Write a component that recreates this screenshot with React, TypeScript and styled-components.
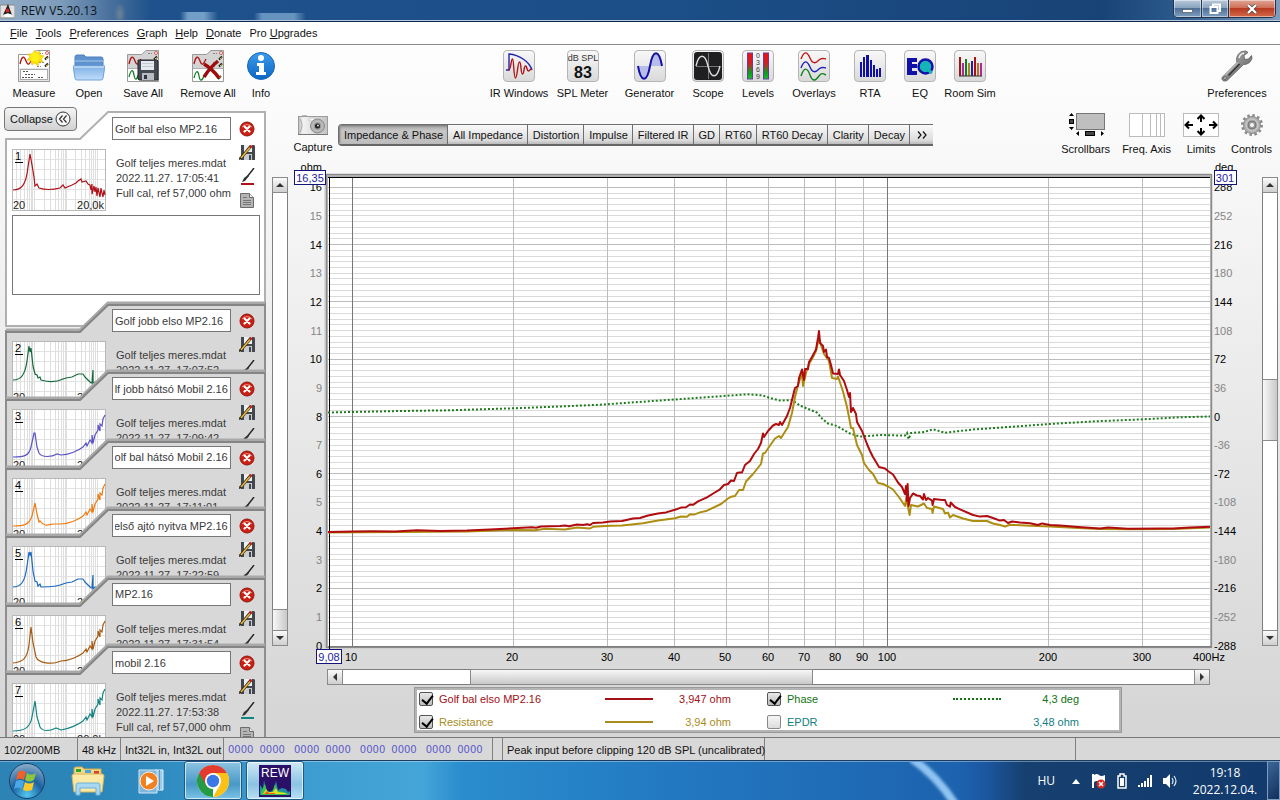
import React, { useEffect, useRef } from "react";
import styled, { createGlobalStyle } from "styled-components";

const Global = createGlobalStyle`
  * { box-sizing: border-box; }
  html, body { margin: 0; height: 100%; }
  body {
    font-family: "Liberation Sans", Arial, sans-serif;
    font-size: 11px;
    line-height: 14px;
    color: #111;
  }
  #root { height: 100%; }
  button, input, textarea { font: inherit; color: inherit; }
  button { border: 0; padding: 0; background: none; cursor: pointer; }
  svg { display: block; }
`;

const Desktop = styled.div`
  display: flex;
  flex-direction: column;
  height: 100vh;
  min-height: 600px;
  overflow: hidden;
`;

/* ---------- window title ---------- */

const TitleBar = styled.header`
  display: flex;
  align-items: center;
  justify-content: space-between;
  flex: none;
  height: 22px;
  border-bottom: 1px solid #10294f;
  box-shadow: inset 0 -1px #b4c8dc;
  background:
    radial-gradient(ellipse 6px 12px at 120px 14px, rgba(190, 180, 150, 0.35), transparent),
    linear-gradient(90deg, rgba(160, 195, 225, 0) 180px, rgba(150, 190, 225, 0.7) 188px, rgba(150, 190, 225, 0.7) 204px, rgba(160, 195, 225, 0) 218px) 0 12px no-repeat,
    linear-gradient(90deg, rgba(160, 195, 225, 0) 254px, rgba(150, 190, 225, 0.6) 262px, rgba(150, 190, 225, 0.6) 294px, rgba(160, 195, 225, 0) 306px) 0 13px no-repeat,
    linear-gradient(90deg, #93adc6 0, #7e9cbb 60px, #4a719d 110px, #1f528c 150px, #1c4f88 50%, #184377 86%, #2c5a8d 92%, #7f9cbb 100%);
`;

const AppName = styled.h1`
  display: flex;
  align-items: center;
  gap: 6px;
  margin: 0;
  font: 12px/18px "Open Sans", "Noto Sans", sans-serif;
  color: #0b1420;
`;

const WindowButtons = styled.div`
  display: flex;
  align-self: flex-start;
  margin-right: 4px;
  border: 1px solid #22354f;
  border-top: 0;
  border-radius: 0 0 5px 5px;
  overflow: hidden;
`;

const WindowButton = styled.button<{ $close?: boolean }>`
  display: grid;
  place-items: center;
  width: ${(p) => (p.$close ? 47 : 27)}px;
  height: 17px;
  box-shadow: inset 0 0 0 1px rgba(255, 255, 255, 0.45);
  background: ${(p) =>
    p.$close
      ? "linear-gradient(#e0a596 0, #cf6f58 45%, #b83a20 50%, #d4694a 100%)"
      : "linear-gradient(#b9cadb 0, #8ba4bf 45%, #4f7098 50%, #7f9fc0 100%)"};
  & + & { border-left: 1px solid #22354f; }
`;

/* ---------- menu and toolbar ---------- */

const MenuBar = styled.nav`
  display: flex;
  align-items: center;
  gap: 8px;
  flex: none;
  height: 23px;
  padding-left: 10px;
  border-bottom: 1px solid #8a8a8a;
  background: #fff;
`;

const Window = styled.main`
  display: flex;
  flex-direction: column;
  flex: 1;
  min-height: 0;
  background: linear-gradient(#fdfdfd 0, #fafafa 12%, #d6d6d6 94%);
`;

const Toolbar = styled.div`
  display: flex;
  justify-content: space-between;
  flex: none;
  height: 60px;
  padding-top: 5px;
`;

const ToolGroup = styled.div<{ $min?: number }>`
  display: flex;
  min-width: ${(p) => p.$min || 0}px;
`;

const ToolButton = styled.button<{ $w: number }>`
  display: flex;
  flex-direction: column;
  align-items: center;
  gap: 4px;
  width: ${(p) => p.$w}px;
  white-space: nowrap;
`;

const IconTile = styled.span`
  display: block;
  width: 32px;
  height: 32px;
  border: 1px solid #b5b5b5;
  border-radius: 4px;
  overflow: hidden;
  background: linear-gradient(#f8f8f8, #d9d9d9);
`;

/* ---------- measurement list ---------- */

const Workspace = styled.div`
  display: flex;
  flex: 1;
  min-height: 0;
`;

const Sidebar = styled.aside`
  position: relative;
  display: flex;
  gap: 6px;
  flex: none;
  width: 288px;
  overflow: hidden;
`;

const CollapseButton = styled.button`
  position: absolute;
  left: 4px;
  top: 2px;
  z-index: 9;
  display: flex;
  align-items: center;
  justify-content: space-between;
  width: 73px;
  height: 24px;
  padding: 0 5px;
  border: 1px solid #777;
  border-radius: 4px;
  background: linear-gradient(#f4f4f4, #d2d2d2);
`;

const CardList = styled.div`
  display: flex;
  flex-direction: column;
  width: 266px;
  padding: 6px 0 0 5px;
`;

const Card = styled.article<{ $size: string }>`
  position: relative;
  flex: ${(p) => p.$size};
  min-height: 0;
`;

const CardShape = styled.svg`
  position: absolute;
  left: 0;
  top: -2px;
`;

const CardBody = styled.div`
  position: relative;
  display: grid;
  grid-template-columns: 94px 119px 20px;
  align-content: start;
  column-gap: 6px;
  height: 100%;
  padding: 6px 0 0 7px;
  color: #3a3a3a;
`;

const Thumb = styled.svg`
  margin-top: 32px;
`;

const CardText = styled.div`
  display: flex;
  flex-direction: column;
  line-height: 15px;
  white-space: nowrap;
`;

const NameInput = styled.input<{ $end?: boolean }>`
  width: 119px;
  height: 23px;
  margin-bottom: 16px;
  padding: 0 2px;
  border: 1px solid #777;
  background: #fff;
  text-align: ${(p) => (p.$end ? "right" : "left")};
`;

const CardLine = styled.span`
  padding-left: 4px;
`;

const CardTools = styled.div`
  display: flex;
  flex-direction: column;
  align-items: center;
  gap: 8px;
  padding-top: 4px;
`;

const Notes = styled.textarea`
  display: block;
  grid-column: 1 / -1;
  width: 248px;
  height: 80px;
  margin-top: 4px;
  border: 1px solid #777;
  background: #fff;
  resize: none;
`;

/* ---------- scroll bars ---------- */

const Track = styled.div<{ $horizontal?: boolean }>`
  display: flex;
  flex-direction: ${(p) => (p.$horizontal ? "row" : "column")};
  flex: none;
  ${(p) => (p.$horizontal ? "height: 16px;" : "width: 16px;")}
  border: 1px solid #7d7d7d;
  background: #fff;
`;

const SideTrack = styled(Track)`
  margin: 72px 0 91px;
`;
const PlotTrack = styled(Track)`
  margin: 17px 2px 21px 0;
`;
const FreqTrack = styled(Track)`
  margin: 2px 70px 2px 39px;
`;

const Arrow = styled.button`
  display: grid;
  place-items: center;
  flex: none;
  width: 14px;
  height: 14px;
  background: linear-gradient(#fafafa, #cfcfcf);
  outline: 1px solid #8a8a8a;
`;

const Space = styled.div<{ $grow: number }>`
  flex: ${(p) => p.$grow};
`;

const Handle = styled.div<{ $grow: number; $horizontal?: boolean }>`
  flex: ${(p) => p.$grow};
  outline: 1px solid #8a8a8a;
  background: linear-gradient(${(p) => (p.$horizontal ? "180deg" : "90deg")}, #f7f7f7, #c9c9c9);
`;

/* ---------- plot ---------- */

const PlotPanel = styled.section`
  display: flex;
  flex-direction: column;
  flex: 1;
  min-width: 0;
`;

const PlotHeader = styled.div`
  display: flex;
  align-items: flex-start;
  flex: none;
  height: 55px;
  padding: 8px 8px 0 6px;
`;

const Capture = styled.button`
  display: flex;
  flex-direction: column;
  align-items: center;
  gap: 4px;
  width: 38px;
  margin-right: 6px;
  padding-top: 2px;
`;

const Tabs = styled.div`
  display: flex;
  height: 22px;
  margin-top: 11px;
  border: 1px solid #6f6f6f;
  border-right: 0;
  border-bottom: 2px solid #666;
  border-radius: 4px 0 0 4px;
  overflow: hidden;
`;

const Tab = styled.button<{ $active?: boolean }>`
  padding: 0 4px 0 5px;
  white-space: nowrap;
  background: ${(p) =>
    p.$active ? "linear-gradient(#a2a2a2, #c6c6c6 30%, #bdbdbd)" : "linear-gradient(#fafafa, #dcdcdc 80%, #bababa)"};
  box-shadow: ${(p) => (p.$active ? "inset 1px 1px 2px #777" : "none")};
  & + & { border-left: 1px solid #6f6f6f; }
`;

const ViewTools = styled.div`
  display: flex;
  gap: 12px;
  margin-left: auto;
`;

const ViewTool = styled.button`
  display: flex;
  flex-direction: column;
  align-items: center;
  gap: 5px;
  white-space: nowrap;
`;

const PlotRow = styled.div`
  display: flex;
  flex: 1;
  min-height: 0;
`;

const Chart = styled.svg`
  flex: 1;
  min-width: 0;
  height: 100%;
`;

const Legend = styled.div`
  display: grid;
  grid-template-columns: 312px 312px;
  column-gap: 36px;
  grid-auto-rows: 23px;
  flex: none;
  margin: 0 158px 4px 126px;
  padding-left: 5px;
  background: #fff;
  box-shadow: inset 0 0 0 1px #999, inset 0 0 0 3px #b4b4b4;
`;

const LegendItem = styled.div<{ $color: string }>`
  display: grid;
  grid-template-columns: 20px 166px 48px 78px;
  align-items: center;
  color: ${(p) => p.$color};
`;

const Check = styled.input`
  appearance: none;
  position: relative;
  width: 14px;
  height: 14px;
  margin: 0;
  border: 1px solid #555;
  border-radius: 2px;
  background: linear-gradient(#e9e9e9, #bcbcbc);
  &:not(:checked) { background: linear-gradient(#f6f6f6, #dcdcdc); border-color: #888; }
  &:checked::after {
    content: "";
    position: absolute;
    left: 4px;
    top: 0;
    width: 5px;
    height: 9px;
    border: solid #000;
    border-width: 0 2px 2px 0;
    transform: rotate(38deg);
  }
`;

const Sample = styled.span<{ $style: string }>`
  height: 0;
  border-top: 2px ${(p) => p.$style} currentColor;
`;

const Value = styled.output`
  text-align: right;
`;

/* ---------- status bar ---------- */

const StatusBar = styled.footer`
  display: flex;
  flex: none;
  height: 23px;
  border-top: 1px solid #777;
  background: #d8d8d8;
  line-height: 24px;
`;

const StatusCell = styled.div<{ $w?: number }>`
  ${(p) => (p.$w ? `width: ${p.$w}px;` : "flex: 1;")}
  flex-shrink: 0;
  padding-left: 4px;
  border-right: 1px solid #808080;
  white-space: nowrap;
  &:last-child { border-right: 0; }
`;

const Bits = styled(StatusCell)`
  display: flex;
  gap: 9px;
  font-family: "DejaVu Sans", sans-serif;
  font-size: 10px;
  color: #5a5acb;
`;

const BitPair = styled.span`
  display: flex;
  gap: 6px;
`;

/* ---------- task bar ---------- */

const TaskBar = styled.footer`
  display: flex;
  align-items: center;
  flex: none;
  height: 40px;
  border-top: 1px solid #1c3d62;
  box-shadow: inset 0 1px rgba(255, 255, 255, 0.35);
  color: #fff;
  font: 12px/17px "Open Sans", "Noto Sans", sans-serif;
  background: linear-gradient(90deg, #2d83b4 0, #2b86ba 8%, #3f9fd3 26%, #44a5d8 33%, #2a8dcd 36%, #2277c0 54%, #1d62ae 75%, #1b57a0 77%, #16406f 80%, #123a6e 100%);
`;

const TaskButton = styled.button<{ $w: number; $open?: boolean; $lit?: boolean }>`
  display: grid;
  place-items: center;
  width: ${(p) => p.$w}px;
  height: 39px;
  margin-left: ${(p) => (p.$open ? 4 : 0)}px;
  ${(p) =>
    p.$open &&
    `border: 1px solid #1d5a86; border-radius: 3px;
     box-shadow: inset 0 0 0 1px rgba(255,255,255,.65);
     background: ${p.$lit ? "linear-gradient(#cfe8f6, #8cc3e3 60%, #b7e0f5)" : "linear-gradient(#8fc4e2, #4799c7 60%, #7cc3e6)"};`}
`;

const Streak = styled.svg`
  margin-left: auto;
  margin-right: 68px;
`;

const Tray = styled.div`
  display: flex;
  align-items: center;
  gap: 9px;
`;

const Clock = styled.time`
  width: 76px;
  text-align: center;
`;

const ShowDesktop = styled.button`
  width: 13px;
  height: 39px;
  margin-left: 4px;
  border: 1px solid #7d9cc0;
  background: linear-gradient(135deg, #3c6698, #102f5c);
`;

/* ---------- icons ---------- */

const Panel = ({ gray }: { gray?: boolean }) => (
  <>
    <path d="M.5 4.500H14.500L19 .5H31.500V31.500H.5Z" fill={gray ? "#d4d4d4" : "#fff"} stroke="#9a9a9a" />
    <path d="M1 18.500H31" stroke="#b0b0b0" />
    <path d="M2 14C4 5 6 6 8 11S11 15 14 9" fill="none" stroke="#b01010" strokeWidth="1.300" />
    <path d="M21 3.500h4M21 12.500h5M19 16.500h4" stroke="#888" strokeDasharray="2 1" />
    <circle cx="29" cy="3" r="1.500" fill="#fff" stroke="#d23a3a" strokeWidth=".8" />
    <path d="M27 9.500l3-3M27 16.500l3-3" stroke="#222" strokeWidth="2" />
    <path d="M28 9l1.500-1.500M28 16l1.500-1.500" stroke="#e6c200" />
  </>
);

const MeasureIcon = () => (
  <svg width="32" height="32">
    <Panel />
    <path d="M1 18H31V31H1z" fill="#e6e6e6" />
    <rect x="2.500" y="19.500" width="27" height="10" fill="#fff" stroke="#aaa" />
    <path d="M5 21.500h6M7 24.500h10M4 27.500h12M20 27.500h5" stroke="#555" strokeDasharray="2 1" />
    <path d="M17 0l2 3 3-2 0 4 4 1-3 3 2 3-4 0-1 4-3-3-3 2-1-4-4-1 3-3-2-3 4 0z" fill="#ffe000" stroke="#e3bb20" strokeWidth=".6" />
    <circle cx="17" cy="7" r="4.500" fill="#fff01a" />
  </svg>
);

const FolderIcon = () => (
  <svg width="32" height="32">
    <defs>
      <linearGradient id="fold" x1="0" y1="0" x2="0" y2="1">
        <stop offset="0" stopColor="#7fb0e6" /><stop offset="1" stopColor="#c0dcf8" />
      </linearGradient>
    </defs>
    <path d="M2 26V7q0-2 2-2h7l2 2h15q2 0 2 2v17z" fill="#5f93cf" stroke="#4d80bb" />
    <path d="M2 11h28" stroke="#a9caec" />
    <path d="M0 16H32L30 28q0 2-2 2H4q-2 0-2-2z" fill="url(#fold)" stroke="#6fa2da" />
    <path d="M1 17h30" stroke="#e6f2fd" />
  </svg>
);

const SaveIcon = () => (
  <svg width="32" height="32">
    <Panel gray />
    <path d="M1 19H14V31H1Z" fill="#fff" />
    <path d="M2 27c2-8 4-8 5-2s3 5 4 0" fill="none" stroke="#118022" strokeWidth="1.300" />
    <path d="M11 10h19l1 1V30H12l-1-1z" fill="#454a52" stroke="#26292e" />
    <path d="M14 11h13v9H14z" fill="#e6ebf0" />
    <path d="M15 13.500h11M15 16.500h11" stroke="#c4cad2" />
    <path d="M15 23h12v7H15z" fill="#b8bcc2" /><path d="M17 25h3v4h-3z" fill="#30343a" />
  </svg>
);

const RemoveIcon = () => (
  <svg width="32" height="32">
    <Panel gray />
    <path d="M1 19H31V31H1Z" fill="#fff" />
    <path d="M2 28c2-8 4-8 5-2s3 5 5 0" fill="none" stroke="#118022" strokeWidth="1.300" />
    <path d="M26 29l3-3" stroke="#222" strokeWidth="2" /><path d="M27 28l2-1.500" stroke="#e6c200" />
    <path d="M12 14c5 3 10 7 15 14M26 11c-5 4-9 8-14 16" fill="none" stroke="#9c0e0e" strokeWidth="3.500" />
  </svg>
);

const InfoIcon = () => (
  <svg width="32" height="32">
    <defs>
      <linearGradient id="info" x1="0" y1="0" x2="0" y2="1">
        <stop offset="0" stopColor="#3d9bea" /><stop offset="1" stopColor="#0b66c4" />
      </linearGradient>
    </defs>
    <circle cx="16" cy="16" r="13.500" fill="url(#info)" stroke="#1566b8" />
    <circle cx="16" cy="8" r="3" fill="#fff" />
    <path d="M12 13h7v9h2v3H11v-3h3v-6h-2z" fill="#fff" />
  </svg>
);

const IrIcon = () => (
  <svg width="30" height="30" fill="none" strokeWidth="1.400">
    <path d="M2 19H5V3C15 4 25 10 28 19" stroke="#2222b0" />
    <path d="M5 19C7 18 7 8 8.500 8s1 19 3 19 2-16 4-16 1 12 3 12 1-8 3-8 1 5 3 5 1-2 3-2" stroke="#b01414" />
  </svg>
);

const SplIcon = () => (
  <svg width="30" height="30" fontFamily="Liberation Sans, sans-serif" textAnchor="middle">
    <text x="15" y="10" fontSize="9" fill="#333">dB SPL</text>
    <text x="15" y="27" fontSize="16" fontWeight="700" fill="#111">83</text>
  </svg>
);

const GeneratorIcon = () => (
  <svg width="30" height="30">
    <path d="M3 15C6 31 12 31 15 15 18-2 23-2 27 15z" fill="#b8bce8" />
    <path d="M3 15C6 32 12 32 15 15 18-2 24-2 27 15" fill="none" stroke="#1111a8" strokeWidth="2" />
  </svg>
);

const ScopeIcon = () => (
  <svg width="30" height="30">
    <rect x="1" y="1" width="28" height="28" rx="3" fill="#1f1f22" />
    <path d="M3 15.500H27M15.500 2V28" stroke="#777" />
    <path d="M3 15C6 2 12 2 15 15S24 28 27 15" fill="none" stroke="#ddd" strokeWidth="1.400" />
  </svg>
);

const LevelsIcon = () => (
  <svg width="30" height="30">
    <defs>
      <linearGradient id="lvl" x1="0" y1="0" x2="0" y2="1">
        <stop offset="0" stopColor="#f01010" /><stop offset=".4" stopColor="#d02020" />
        <stop offset=".75" stopColor="#109a20" /><stop offset="1" stopColor="#10c020" />
      </linearGradient>
    </defs>
    <rect x="4.500" y="2" width="5" height="26" fill="url(#lvl)" stroke="#6a3aa0" />
    <rect x="20.500" y="2" width="5" height="26" fill="url(#lvl)" stroke="#6a3aa0" />
    <g fontFamily="Liberation Sans, sans-serif" fontSize="7" textAnchor="middle" fill="#333">
      <text x="15" y="7">0</text><text x="15" y="14">3</text><text x="15" y="21">6</text><text x="15" y="28">9</text>
    </g>
  </svg>
);

const OverlaysIcon = () => (
  <svg width="30" height="30" fill="none" strokeWidth="1.400">
    <path d="M2 8C5 0 8 0 11 7s6 5 9 2 5-1 7-1" stroke="#c01818" />
    <path d="M2 17C5 9 8 9 11 16s6 5 9 2 5-1 7-1" stroke="#2020b8" />
    <path d="M2 25C5 16 8 16 11 24s6 5 9 1 5-2 7-1" stroke="#128020" />
  </svg>
);

const RtaIcon = () => (
  <svg width="30" height="30" fill="#1010a8">
    <path d="M5 11h2v15H5zM8 6h2v20H8zM11 4h3v22h-3zM15 9h2v17h-2zM18 14h2v12h-2zM21 18h2v8h-2zM24 17h2v9h-2z" />
  </svg>
);

const EqIcon = () => (
  <svg width="30" height="30">
    <path d="M2 7h10v4H7v2h5v4H7v3h5v4H2z" fill="#1111a8" />
    <circle cx="20.500" cy="15.500" r="7" fill="#15b4b8" stroke="#1111a8" strokeWidth="2.500" />
    <path d="M22 18l5 4" stroke="#15b4b8" strokeWidth="3" />
  </svg>
);

const RoomIcon = () => (
  <svg width="30" height="30" strokeWidth="2">
    <path d="M5 25V6M20 25V6" stroke="#a81212" /><path d="M8 25V12M26 25V12" stroke="#b028a0" />
    <path d="M11 25V8" stroke="#128020" /><path d="M14 25V12" stroke="#a88a10" />
    <path d="M17 25V10" stroke="#2020b0" /><path d="M23 25V12" stroke="#c07018" />
    <path d="M4 25H27" stroke="#333" strokeWidth="1" />
  </svg>
);

const WrenchIcon = () => (
  <svg width="32" height="32">
    <defs>
      <linearGradient id="steel" x1="0" y1="0" x2="1" y2="1">
        <stop offset="0" stopColor="#b9b9b9" /><stop offset=".5" stopColor="#8a8a8a" /><stop offset="1" stopColor="#555" />
      </linearGradient>
    </defs>
    <path d="M1.500 27 16 12.500C14.500 8 17 3 21 1.500L25 1l2 1.500-4 3L23.500 9.500l4-.5 3-3.500L31 8c-1 4-4 6.500-8.500 6.500L6 30.500c-3 1.500-6.500-.5-4.500-3.500z" fill="url(#steel)" stroke="#5a5a5a" strokeWidth=".8" />
    <path d="M7.500 25.500 18.500 14" stroke="#333" strokeWidth="1.500" />
    <path d="M4 25.500 17 12.500" stroke="#ddd" />
    <path d="M18 8q1-4 5-5" stroke="#eee" strokeWidth="1.500" fill="none" />
    <circle cx="4" cy="28" r="1.300" fill="#fff" stroke="#444" strokeWidth=".8" />
  </svg>
);

const CloseIcon = () => (
  <svg width="16" height="16">
    <circle cx="8" cy="8" r="7" fill="#cc1f12" stroke="#8f1810" />
    <path d="M3 6q5-5 10 0" stroke="#ea8a7a" fill="none" />
    <path d="M5.500 5.500l5 5M10.500 5.500l-5 5" stroke="#fff" strokeWidth="2.200" strokeLinecap="round" />
  </svg>
);

const DiskPenIcon = () => (
  <svg width="16" height="15">
    <path d="M2 0h13l1 1v14H2z" fill="#43474e" />
    <path d="M5 0h8v7H5z" fill="#eef0f3" /><path d="M5 9h8v6H5z" fill="#c9cdd2" /><path d="M10 10h2v5h-2z" fill="#43474e" />
    <path d="M12 1 1.500 13.500" stroke="#3a2f14" strokeWidth="2.800" /><path d="M11 2.500 2 13" stroke="#e6b544" strokeWidth="1.600" />
    <path d="M12.500 .5 11 2.500" stroke="#d01818" strokeWidth="2.200" />
    <path d="M0 15l.5-3 2 2z" fill="#111" />
  </svg>
);

const BrushIcon = ({ color }: { color: string }) => (
  <svg width="15" height="17">
    <path d="M14 0 7 9" stroke="#222" strokeWidth="1.400" /><path d="M8 7l1 1-4 5-3 1 2-4z" fill="#333" />
    <path d="M1 16H14" stroke={color} strokeWidth="2" />
  </svg>
);

const NoteIcon = () => (
  <svg width="14" height="15">
    <path d="M.5 .5h9l4 4v10H.5z" fill="#b4b4b4" stroke="#6c6c6c" /><path d="M9.500 .5v4h4" fill="#eee" stroke="#6c6c6c" />
    <path d="M3 4.500h4M3 7.500h8M3 9.500h8M3 11.500h8" stroke="#777" />
  </svg>
);

const CameraIcon = () => (
  <svg width="30" height="21">
    <defs>
      <linearGradient id="cam"><stop offset="0" stopColor="#bbb" /><stop offset=".15" stopColor="#f2f2f2" /><stop offset="1" stopColor="#c4c4c4" /></linearGradient>
    </defs>
    <path d="M4 0h5v2H4z" fill="#bbb" />
    <rect x=".5" y="1.500" width="29" height="18" fill="url(#cam)" stroke="#9c9c9c" />
    <path d="M0 19.500h30" stroke="#777" />
    <path d="M2 4q4 6 0 13" stroke="#aaa" fill="none" />
    <path d="M11 3h6v3h-6z" fill="#f4f4f4" stroke="#ccc" />
    <circle cx="19.500" cy="11" r="7" fill="#b4b4b4" stroke="#8a8a8a" /><circle cx="19.500" cy="11" r="4.500" fill="#999" stroke="#ddd" strokeWidth=".6" />
    <circle cx="19.500" cy="11" r="2.500" fill="#222" /><circle cx="20" cy="10.500" r="1" fill="#ddd" />
  </svg>
);

const ScrollbarsIcon = () => (
  <svg width="38" height="24">
    <rect x="9.500" y=".5" width="28" height="16" fill="#bfbfbf" stroke="#777" />
    <path d="M2 3 4.500 0 7 3zM2 14h5l-2.500 3zM12 18v5l-3-2.500zM34 18v5l3-2.500z" />
    <rect x="2.500" y="6.500" width="4" height="4" fill="#444" stroke="#000" /><rect x="18.500" y="18.500" width="9" height="4" fill="#444" stroke="#000" />
  </svg>
);

const FreqIcon = () => (
  <svg width="36" height="24">
    <rect x=".5" y=".5" width="35" height="23" fill="#fff" stroke="#bbb" />
    <path d="M13.500 0V24M21.500 0V24M27.500 0V24M31.500 0V24" stroke="#bbb" />
  </svg>
);

const LimitsIcon = () => (
  <svg width="36" height="24">
    <rect x=".5" y=".5" width="35" height="23" fill="#fff" stroke="#bbb" />
    <path d="M18 9V3M14.500 6 18 2.500 21.500 6M18 15v6M14.500 18l3.500 3.500L21.500 18M10 12H3M6 8.500 2.500 12 6 15.500M26 12h7M30 8.500l3.500 3.500L30 15.500" fill="none" stroke="#000" strokeWidth="2" />
  </svg>
);

const GearIcon = () => (
  <svg width="24" height="24">
    <circle cx="12" cy="12" r="9.500" fill="none" stroke="#8a8a8a" strokeWidth="3" strokeDasharray="2.500 2.470" />
    <circle cx="12" cy="12" r="8.500" fill="#b0b0b0" stroke="#8c8c8c" />
    <circle cx="12" cy="12" r="6" fill="none" stroke="#cfcfcf" />
    <circle cx="12" cy="12" r="4" fill="#999" stroke="#777" /><circle cx="12" cy="12" r="2" fill="#f5f5f5" />
  </svg>
);

const ArrowGlyph = ({ turn }: { turn: number }) => (
  <svg width="10" height="10"><path d="M1 7 5 3l4 4z" fill="#333" transform={`rotate(${turn} 5 5)`} /></svg>
);

/* ---------- data ---------- */

type Pt = [number, number];
const toPath = (pts: Pt[]) => "M" + pts.map((p) => p.join(" ")).join("L");

const impedance: Pt[] = [
  [328, 532], [353, 531.6], [372, 531.3], [395, 531.4], [417, 530.3], [440, 530.9], [467, 530.5], [490, 529.6], [513, 528.3],
  [532, 527.3], [536, 527.7], [541, 526.5], [560, 526], [565, 525.6], [569, 526.3], [577, 524.5], [583, 525], [587, 524.2],
  [590, 525], [593, 523], [603, 522.6], [610, 521.5], [622, 521], [633, 518.6], [640, 518], [648, 515.5], [658, 513.4],
  [666, 512.4], [675, 509.7], [681, 507.6], [686, 507.3], [690, 504.5], [693, 504.8], [698, 501.4], [707, 497.3], [714, 493],
  [720, 489.3], [724, 485], [728, 484], [731, 480.5], [734, 481], [737, 473], [739, 472.5], [742, 472.5], [745, 465], [750, 461],
  [754, 454], [758, 449], [761, 443], [763, 433.5], [764, 437], [768, 431], [773, 425.5], [776, 424], [779, 425], [780, 422],
  [782, 425], [787, 416], [790, 408], [793, 396], [795, 388], [798, 386], [799, 378], [802, 369.5], [804, 380], [805, 369],
  [808, 369], [809, 362], [812, 357], [816, 349.5], [818, 338], [819, 331], [820, 343], [823, 346], [824, 352], [826, 349.5],
  [827, 357], [829, 358], [831, 365], [833, 373.5], [838, 374], [839, 369.5], [840, 375], [844, 381], [847, 390], [849, 397],
  [850, 393], [851, 412], [853, 408], [856, 414], [857, 422], [862, 431], [867, 444], [870, 451], [873, 457], [879, 467],
  [885, 468.5], [888, 471], [893, 474.5], [898, 482.5], [902, 487], [905, 494], [906, 486], [907, 501], [907.6, 484],
  [908.6, 506], [910, 498], [913, 493.5], [917, 495.5], [920, 496], [923, 499.5], [924, 494], [926, 500], [928, 498],
  [932, 500.6], [932.6, 505], [934, 499], [942, 500], [945, 500], [947, 505], [950, 506.7], [950.7, 502.5], [955, 507],
  [960, 509.3], [973, 515], [980, 516.6], [987, 516], [993, 518], [1000, 520.6], [1004, 520], [1008, 523], [1012, 521.5],
  [1020, 522.5], [1030, 523.3], [1038, 525], [1042, 523.4], [1050, 525], [1060, 525.5], [1078, 527], [1100, 528.4], [1108, 527.6],
  [1128, 528.8], [1160, 528.4], [1173, 528.6], [1190, 527.4], [1210, 526.8],
];

const resistance: Pt[] = [
  [328, 532.5], [400, 532], [467, 531.4], [513, 530], [535, 530.2], [545, 528.8], [565, 529.6], [577, 527.6], [590, 528.5],
  [593, 526.8], [610, 525.7], [622, 525.6], [643, 523.2], [658, 520.6], [675, 518.3], [681, 516.5], [687, 516.8], [690, 514.3],
  [694, 514.6], [700, 512.4], [707, 510.7], [721, 504], [728, 498.5], [731, 496.8], [735, 496], [739, 490], [743, 490],
  [746, 481.5], [753, 474], [761, 464], [763, 453.5], [765, 453], [769, 447], [775, 438.5], [779, 436], [781, 438],
  [788, 427], [792, 413], [795, 397], [798, 385], [802, 373.5], [803, 386], [806, 373], [809, 364], [812, 359], [816, 351],
  [819, 338], [821, 345], [824, 354], [829, 361], [832, 378], [837, 379], [838, 376.5], [843, 391.5], [847, 407],
  [849, 417], [851, 428], [853, 428], [857, 445], [862, 455], [864, 463], [869, 470], [873, 474], [878, 483], [883, 484],
  [888, 486.5], [893, 489.5], [900, 498.5], [905, 506], [906.3, 498], [908, 507], [909.6, 515], [911, 505], [918, 506.5],
  [924, 503.5], [927, 508], [932, 509], [932.5, 513], [934, 506.5], [943, 509], [945, 513.5], [948, 512.6], [950, 517.5],
  [953, 515], [963, 518.5], [973, 521], [987, 521], [993, 523.5], [1000, 525], [1005, 526.5], [1010, 524.8], [1030, 525.8],
  [1050, 526.6], [1078, 528], [1100, 529], [1130, 529.2], [1173, 529], [1210, 527.4],
];

const phase: Pt[] = [
  [328, 412.5], [400, 411], [450, 410.3], [513, 408.3], [560, 406.5], [600, 404.7], [653, 401], [700, 397.7], [747, 394.3],
  [762, 395.3], [770, 398], [780, 400.6], [792, 400], [800, 405.6], [817, 412.6], [822, 418.5], [828, 423.5], [837, 426],
  [850, 433.5], [860, 436.6], [880, 435], [905, 435.6], [907, 433], [908.6, 439], [911, 433], [924, 432], [933, 429.3],
  [945, 432.7], [973, 429.5], [1000, 427.6], [1050, 424], [1095, 421.3], [1143, 419.3], [1180, 417.3], [1210, 416.5],
];

const tail = "C56 46 66 42 71 38L74 34 75 37 78 31 80 34 80 26 81 34 83 26 86 21 86 16 88 22 88 15 90 17 91 10 93 6";
const hump = "C36 41 45 41 51 38L54 37 60 36 66 33 71 33 73 36 76 39 79 42 80 42 81 29 81 43 83 41 86 43 90 38";

const measurements = [
  {
    name: "Golf bal elso MP2.16", date: "2022.11.27. 17:05:41", color: "#b01018",
    curve: "M1 41C9 41 14 37 16 18L18 5 20 16 22 28 23 37 25 35 27 39C33 41 40 41 48 39L51 36 53 39 60 36 64 34 66 32 69 30 70 33 74 32 76 35 78 36 79 41 80 35 80 45 82 37 83 43 84 38 85 47 86 39 88 48 89 39 90 44 91 48 92 41 93 46",
  },
  { name: "Golf jobb elso MP2.16", date: "2022.11.27. 17:07:52", color: "#14683c", curve: "M1 39C9 39 13 34 15 20L17 5 18 11 19 7 21 25 23 33 25 34 26 37 28 36 29 39" + hump },
  { name: "Golf jobb hátsó Mobil 2.16", date: "2022.11.27. 17:09:42", color: "#5a54c8", curve: "M1 48C12 48 17 47 19 38L22 24 23 24 25 38 27 44C30 49 40 48 45 45L49 46" + tail },
  { name: "Golf bal hátsó Mobil 2.16", date: "2022.11.27. 17:11:01", color: "#f07c10", curve: "M1 48C12 48 17 47 20 38L23 25 25 36 27 44 28 43C32 49 36 47 41 46L49 46" + tail },
  { name: "első ajtó nyitva MP2.16", date: "2022.11.27. 17:22:59", color: "#1c6ac0", curve: "M1 41C9 41 13 36 15 20L17 6 18 9 19 6 21 25 23 35 25 36 26 40 28 38 29 41" + hump, end: true },
  { name: "MP2.16", date: "2022.11.27. 17:31:54", color: "#a85a10", curve: "M1 48C11 47 15 44 17 30L19 12 21 28 24 42C27 49 40 49 46 47L49 46" + tail },
  { name: "mobil 2.16", date: "2022.11.27. 17:53:38", color: "#128484", curve: "M1 48C12 48 18 45 20 34L23 18 25 34 28 44C31 49 38 48 44 45L49 47" + tail },
];

/* ---------- parts ---------- */

function MeasurementName({ value, end }: { value: string; end?: boolean }) {
  const ref = useRef<HTMLInputElement>(null);
  useEffect(() => {
    if (ref.current) ref.current.scrollLeft = ref.current.scrollWidth;
  }, []);
  return <NameInput ref={ref} defaultValue={value} $end={end} aria-label="Measurement name" />;
}

const thumbX = [4, 8, 12, 15, 17, 19, 20, 22, 32, 38, 43, 46, 49, 51, 53, 54, 63, 69, 73, 77, 79, 81, 83, 85];

function MeasurementCard({ index }: { index: number }) {
  const m = measurements[index];
  const selected = index === 0;
  const last = index === measurements.length - 1;
  return (
    <Card $size={selected ? "0 0 192px" : last ? "0 0 92px" : "1 1 0"}>
      <CardShape width="262" height={selected ? 220 : 128}>
        {selected ? (
          <path d="M1 217V30H75L103 3H260V217Z" fill="#fff" stroke="#b0b0b0" strokeWidth="2" />
        ) : (
          <>
            <path d="M1 140V30H75L103 2H260V140Z" fill="#d8d8d8" stroke="#8e8e8e" strokeWidth="2" />
            <path d="M1 29H75L103 2H260" fill="none" stroke="#a9a9a9" strokeWidth="3" />
            <path d="M1 31H75L103 4H260" fill="none" stroke="#858585" strokeWidth="2" />
          </>
        )}
      </CardShape>
      <CardBody>
        <Thumb width="94" height="62">
          <rect x=".5" y=".5" width="93" height="61" fill="#fff" stroke="#b8b8b8" />
          <path d={thumbX.map((x) => `M${x}.5 1V61`).join("")} stroke="#dedede" />
          <path d="M1 10.500H93M1 20.500H93M1 30.500H93M1 40.500H93M1 50.500H93" stroke="#e2e2e2" />
          <path d={m.curve} fill="none" stroke={m.color} strokeWidth="1.200" />
          <text x="3" y="11" fontSize="11" fill="#000">{index + 1}</text>
          <path d="M3 13.500H11" stroke="#000" />
          <text x="1" y="60" fontSize="11" fill="#222">20</text>
          <text x="92" y="60" fontSize="11" textAnchor="end" fill="#222">20,0k</text>
        </Thumb>
        <CardText>
          <MeasurementName value={m.name} end={m.end} />
          <CardLine>Golf teljes meres.mdat</CardLine>
          <CardLine>{m.date}</CardLine>
          <CardLine>Full cal, ref 57,000 ohm</CardLine>
        </CardText>
        <CardTools>
          <button aria-label="Remove"><CloseIcon /></button>
          <button aria-label="Save"><DiskPenIcon /></button>
          <button aria-label="Trace colour"><BrushIcon color={m.color} /></button>
          <button aria-label="Notes"><NoteIcon /></button>
        </CardTools>
        {selected && <Notes aria-label="Notes" />}
      </CardBody>
    </Card>
  );
}

function ScrollParts({ before, size, after, horizontal }: { before: number; size: number; after: number; horizontal?: boolean }) {
  return (
    <>
      <Arrow aria-label="Scroll back"><ArrowGlyph turn={horizontal ? 270 : 0} /></Arrow>
      <Space $grow={before} />
      <Handle $grow={size} $horizontal={horizontal} />
      <Space $grow={after} />
      <Arrow aria-label="Scroll forward"><ArrowGlyph turn={horizontal ? 90 : 180} /></Arrow>
    </>
  );
}

const yOf = (v: number) => 645.7 - 28.65 * v;
const xOf = (f: number) => 352.3 + 535.2 * Math.log10(f / 10);
const crisp = (n: number) => Math.floor(n) + 0.5;

function Plot() {
  const minor = Array.from({ length: 81 }, (_, i) => i).filter((i) => i % 10 !== 0);
  const whole = Array.from({ length: 17 }, (_, i) => i);
  const freqs = [10, 20, 30, 40, 50, 60, 70, 80, 90, 100, 200, 300];
  return (
    <Chart viewBox="288 160 974 507" role="img" aria-label="Impedance and phase" fontSize="11">
      <text x="322" y="171" textAnchor="end">ohm</text>
      <text x="1215" y="171">deg</text>
      <rect x="324.5" y="173.500" width="888" height="475" rx="2" fill="#c6c6c6" />
      <rect x="326.5" y="174.500" width="885" height="473" fill="#b0b0b0" stroke="#8a8a8a" />
      <rect x="328" y="177" width="882" height="469" fill="#fff" />
      <path d={minor.map((i) => `M328 ${crisp(yOf(i / 5))}H1210`).join("")} stroke="#dadada" />
      <path d={whole.filter((v) => v % 2 === 0 && v > 0).map((v) => `M328 ${crisp(yOf(v))}H1210`).join("")} stroke="#bcbcbc" />
      <path d={freqs.map((f) => `M${crisp(xOf(f))} 177V646`).join("")} stroke="#bcbcbc" />
      <path d={[10, 100].map((f) => `M${crisp(xOf(f))} 177V646`).join("")} stroke="#777" />
      <path d="M328 646.500H1211" stroke="#7c7c7c" />
      <path d="M328 177.500H1210M329.500 177V652" stroke="#000" />
      <path d={toPath(phase)} fill="none" stroke="#1c7c1c" strokeWidth="2" strokeDasharray="2 2" />
      <path d={toPath(resistance)} fill="none" stroke="#ae8e12" strokeWidth="2" strokeLinejoin="round" />
      <path d={toPath(impedance)} fill="none" stroke="#b00c10" strokeWidth="2" strokeLinejoin="round" />
      {whole.map((v) => (
        <React.Fragment key={v}>
          <text x="322" y={Math.round(yOf(v)) + 4} textAnchor="end" fill={v % 2 ? "#858585" : "#000"}>{v}</text>
          <text x="1214" y={Math.round(yOf(v)) + 4} fill={v % 2 ? "#858585" : "#000"}>{(v - 8) * 36}</text>
        </React.Fragment>
      ))}
      {freqs.map((f) => (
        <text key={f} x={Math.round(xOf(f)) - 1} y="661" textAnchor="middle">{f}</text>
      ))}
      <text x="1209" y="661" textAnchor="middle">400Hz</text>
      <g fill="#fff" stroke="#14147c">
        <rect x="294.5" y="170.500" width="31" height="14" />
        <rect x="1214.5" y="170.500" width="22" height="14" />
        <rect x="316.5" y="649.500" width="25" height="14" />
      </g>
      <g fill="#1c1c9c" textAnchor="middle">
        <text x="310" y="182">16,35</text>
        <text x="1225" y="182">301</text>
        <text x="329" y="661">9,08</text>
      </g>
    </Chart>
  );
}

const traces = [
  { id: "imp", name: "Golf bal elso MP2.16", value: "3,947 ohm", color: "#a01014", line: "solid", on: true },
  { id: "phase", name: "Phase", value: "4,3 deg", color: "#127412", line: "dotted", on: true },
  { id: "res", name: "Resistance", value: "3,94 ohm", color: "#a88c1c", line: "solid", on: true },
  { id: "epdr", name: "EPDR", value: "3,48 ohm", color: "#128080", line: "none", on: false },
];

const menu: [string, string, string][] = [
  ["", "F", "ile"], ["", "T", "ools"], ["", "P", "references"], ["", "G", "raph"], ["", "H", "elp"], ["", "D", "onate"], ["Pro ", "U", "pgrades"],
];

const fileTools = [
  { label: "Measure", w: 68, icon: <MeasureIcon /> },
  { label: "Open", w: 42, icon: <FolderIcon /> },
  { label: "Save All", w: 66, icon: <SaveIcon /> },
  { label: "Remove All", w: 64, icon: <RemoveIcon /> },
  { label: "Info", w: 42, icon: <InfoIcon /> },
];

const signalTools = [
  { label: "IR Windows", w: 64, icon: <IrIcon /> },
  { label: "SPL Meter", w: 63, icon: <SplIcon /> },
  { label: "Generator", w: 71, icon: <GeneratorIcon /> },
  { label: "Scope", w: 46, icon: <ScopeIcon /> },
  { label: "Levels", w: 54, icon: <LevelsIcon /> },
  { label: "Overlays", w: 58, icon: <OverlaysIcon /> },
  { label: "RTA", w: 54, icon: <RtaIcon /> },
  { label: "EQ", w: 46, icon: <EqIcon /> },
  { label: "Room Sim", w: 54, icon: <RoomIcon /> },
];

const tabs = ["Impedance & Phase", "All Impedance", "Distortion", "Impulse", "Filtered IR", "GD", "RT60", "RT60 Decay", "Clarity", "Decay"];

export default function App() {
  return (
    <Desktop>
      <Global />
      <TitleBar>
        <AppName>
          <svg width="15" height="17">
            <rect x="0" y="3" width="15" height="13" rx="1" fill="#e2e2e2" stroke="#888" />
            <path d="M8 2 12 13Q8 10 3 13Z" fill="#222" />
            <circle cx="7.500" cy="8.500" r="2" fill="#d02020" />
            <path d="M4 13q4-3 8 0l-1 2H5z" fill="#fff" />
          </svg>
          REW V5.20.13
        </AppName>
        <WindowButtons>
          <WindowButton aria-label="Minimize">
            <svg width="12" height="10"><rect x=".5" y="5.500" width="10" height="3" fill="#fff" stroke="#444" strokeWidth=".6" /></svg>
          </WindowButton>
          <WindowButton aria-label="Restore">
            <svg width="12" height="12" fill="none" stroke="#fff" strokeWidth="2"><path d="M4 3V1.500h7V8H9" /><rect x="1.500" y="4" width="7" height="6" /></svg>
          </WindowButton>
          <WindowButton $close aria-label="Close">
            <svg width="12" height="10"><path d="M2 1l8 8M10 1 2 9" stroke="#444" strokeWidth="3.500" /><path d="M2 1l8 8M10 1 2 9" stroke="#fff" strokeWidth="2.300" /></svg>
          </WindowButton>
        </WindowButtons>
      </TitleBar>

      <MenuBar>
        {menu.map(([pre, key, rest]) => (
          <button key={key}>{pre}<u>{key}</u>{rest}</button>
        ))}
      </MenuBar>

      <Window>
        <Toolbar>
          <ToolGroup $min={290}>
            {fileTools.map((t) => <ToolButton key={t.label} $w={t.w}>{t.icon}{t.label}</ToolButton>)}
          </ToolGroup>
          <ToolGroup>
            {signalTools.map((t) => <ToolButton key={t.label} $w={t.w}><IconTile>{t.icon}</IconTile>{t.label}</ToolButton>)}
          </ToolGroup>
          <ToolGroup>
            <ToolButton $w={86}><WrenchIcon />Preferences</ToolButton>
          </ToolGroup>
        </Toolbar>

        <Workspace>
          <Sidebar>
            <CollapseButton>
              Collapse
              <svg width="16" height="16" fill="none" stroke="#333">
                <circle cx="8" cy="8" r="7" fill="#f6f6f6" /><path d="M7.500 4.500 4.500 8l3 3.500M11.500 4.500 8.500 8l3 3.500" strokeWidth="1.200" />
              </svg>
            </CollapseButton>
            <CardList>
              {measurements.map((m, i) => <MeasurementCard key={m.name} index={i} />)}
            </CardList>
            <SideTrack><ScrollParts before={416} size={21} after={0} /></SideTrack>
          </Sidebar>

          <PlotPanel>
            <PlotHeader>
              <Capture><CameraIcon />Capture</Capture>
              <Tabs role="tablist">
                {tabs.map((t, i) => <Tab key={t} role="tab" $active={i === 0}>{t}</Tab>)}
                <Tab aria-label="More graphs">
                  <svg width="14" height="12" fill="none" stroke="#111"><path d="M3 2.500 6 6 3 9.500M8 2.500 11 6 8 9.500" strokeWidth="1.200" /></svg>
                </Tab>
              </Tabs>
              <ViewTools>
                <ViewTool><ScrollbarsIcon />Scrollbars</ViewTool>
                <ViewTool><FreqIcon />Freq. Axis</ViewTool>
                <ViewTool><LimitsIcon />Limits</ViewTool>
                <ViewTool><GearIcon />Controls</ViewTool>
              </ViewTools>
            </PlotHeader>
            <PlotRow>
              <Plot />
              <PlotTrack><ScrollParts before={188} size={60} after={191} /></PlotTrack>
            </PlotRow>
            <FreqTrack $horizontal><ScrollParts horizontal before={129} size={341} after={383} /></FreqTrack>
            <Legend>
              {traces.map((t) => (
                <LegendItem key={t.id} $color={t.color}>
                  <Check type="checkbox" id={t.id} defaultChecked={t.on} />
                  <label htmlFor={t.id}>{t.name}</label>
                  <Sample $style={t.line} />
                  <Value>{t.value}</Value>
                </LegendItem>
              ))}
            </Legend>
          </PlotPanel>
        </Workspace>

        <StatusBar>
          <StatusCell $w={78}>102/200MB</StatusCell>
          <StatusCell $w={43}>48 kHz</StatusCell>
          <StatusCell $w={103}>Int32L in, Int32L out</StatusCell>
          <Bits $w={269}>
            {[0, 1, 2, 3].map((i) => <BitPair key={i}><span>0000</span><span>0000</span></BitPair>)}
          </Bits>
          <StatusCell $w={10} />
          <StatusCell $w={262}>Peak input before clipping 120 dB SPL (uncalibrated)</StatusCell>
          <StatusCell />
          <StatusCell $w={204} />
        </StatusBar>
      </Window>

      <TaskBar>
        <TaskButton $w={54} aria-label="Start">
          <svg width="38" height="38">
            <defs>
              <radialGradient id="orb" cx=".5" cy=".9" r=".9"><stop offset="0" stopColor="#52c8f0" /><stop offset=".5" stopColor="#1c62a0" /><stop offset="1" stopColor="#8fb0cc" /></radialGradient>
            </defs>
            <circle cx="19" cy="19" r="17.500" fill="url(#orb)" stroke="#15406b" />
            <path d="M10 10q4-3 8 0l-2 8q-4-3-8 0z" fill="#f0602a" /><path d="M19 11q4 3 9 0l-2 7q-5 3-9 0z" fill="#8cc63c" />
            <path d="M8 19q4-2 8 0l-2 8q-4-3-8 0z" fill="#4aa8e8" /><path d="M17 20q4 3 9 0l-2 8q-5 2-9 0z" fill="#ffc92a" />
          </svg>
        </TaskButton>
        <TaskButton $w={68} aria-label="Explorer">
          <svg width="34" height="30">
            <path d="M3 25V3q0-2 2-2h6l2 2h17v22z" fill="#f4d982" stroke="#d0a94c" />
            <path d="M5 3h5v3H5z" fill="#2ea52e" /><path d="M14 4h6v3h-6z" fill="#4aa3e0" /><path d="M23 5h5v3h-5z" fill="#d8402a" />
            <path d="M1 10q0-2 2-2h28q2 0 2 2l-2 16H3z" fill="#fbe9a6" stroke="#d8b65c" />
            <path d="M5 29V19q0-2 2-2h20q2 0 2 2v10h-4v-7H9v7z" fill="#a9d8f2" stroke="#6fb1d8" />
          </svg>
        </TaskButton>
        <TaskButton $w={58} aria-label="Media Player">
          <svg width="28" height="28">
            <path d="M18 3h8v20h-8z" fill="#9ccbe8" stroke="#e4f3fb" /><path d="M22.500 3v20" stroke="#5a98c8" /><path d="M2 3h18v23H2z" fill="#7fb6dc" stroke="#cfe6f5" />
            <circle cx="12" cy="14" r="9" fill="#f08020" stroke="#fff0e0" /><path d="M9 9l8 5-8 5z" fill="#fff" />
          </svg>
        </TaskButton>
        <TaskButton $w={58} $open aria-label="Chrome">
          <svg width="34" height="34" viewBox="-17 -17 34 34">
            <circle r="16" fill="#fff" />
            <path d="M0 0 0 16A16 16 0 0 1-13.900-8Z" fill="#269b45" />
            <path d="M-7 4-13.900-8A16 16 0 0 1 13.900-8H0Z" fill="#e33b2e" />
            <path d="M0-8H13.900A16 16 0 0 1 0 16L7 4Z" fill="#fbc116" />
            <circle r="8" fill="#fff" /><circle r="6.200" fill="#3a78e8" />
          </svg>
        </TaskButton>
        <TaskButton $w={58} $open $lit aria-label="REW">
          <svg width="32" height="32">
            <rect width="32" height="32" fill="#2b1068" />
            <text x="16" y="12" fontSize="12" textAnchor="middle" fill="#fff" fontFamily="Liberation Sans, sans-serif">REW</text>
            <path d="M1 30V20l3 4 1-9 2 10 4 2 4-3 2-8 2 9 4-2 4 1 2 3 2-1v4z" fill="#1f8fa0" />
            <path d="M2 30V27l4-8 2 7 5 2 3-9 2 7 6 1 6 2v1z" fill="#3cc050" />
            <path d="M4 29l3-5 2 3 5 0 3-4 2 4 8 1v1z" fill="#d8e020" /><path d="M5 29l3-3 2 2 6 0v1z" fill="#f06018" />
          </svg>
        </TaskButton>
        <Streak width="60" height="38">
          <defs><filter id="soft"><feGaussianBlur stdDeviation="1.500" /></filter></defs>
          <path d="M2-4Q28 14 46 42" fill="none" stroke="#8fc4f2" strokeWidth="8" filter="url(#soft)" />
        </Streak>
        <Tray>
          <span>HU</span>
          <svg width="18" height="12"><path d="M8 9l4-5 4 5z" fill="#fff" /></svg>
          <svg width="16" height="16">
            <path d="M2 1v14" stroke="#fff" strokeWidth="2" /><path d="M3 2q3-2 5 0t6 0v7q-4 2-6 0t-5 0z" fill="#fff" />
            <circle cx="10" cy="11" r="4.500" fill="#d82a20" /><path d="M8 9l4 4M12 9l-4 4" stroke="#fff" strokeWidth="1.500" />
          </svg>
          <svg width="12" height="16"><path d="M4 1h4v2h2v12H2V3h2z" fill="none" stroke="#fff" strokeWidth="1.500" /><path d="M4 5h4v8H4z" fill="#fff" /></svg>
          <svg width="16" height="16" fill="#fff"><path d="M1 12h2v2H1zM4 10h2v4H4zM7 8h2v6H7zM10 5h2v9h-2zM13 2h2v12h-2z" /></svg>
          <svg width="16" height="16"><path d="M1 5h3l4-4v14l-4-4H1z" fill="#fff" /><path d="M10 5q2 3 0 6M12 3q4 5 0 10" fill="none" stroke="#dce8f4" strokeWidth="1.200" /></svg>
          <Clock>19:18<br />2022.12.04.</Clock>
        </Tray>
        <ShowDesktop aria-label="Show desktop" />
      </TaskBar>
    </Desktop>
  );
}
